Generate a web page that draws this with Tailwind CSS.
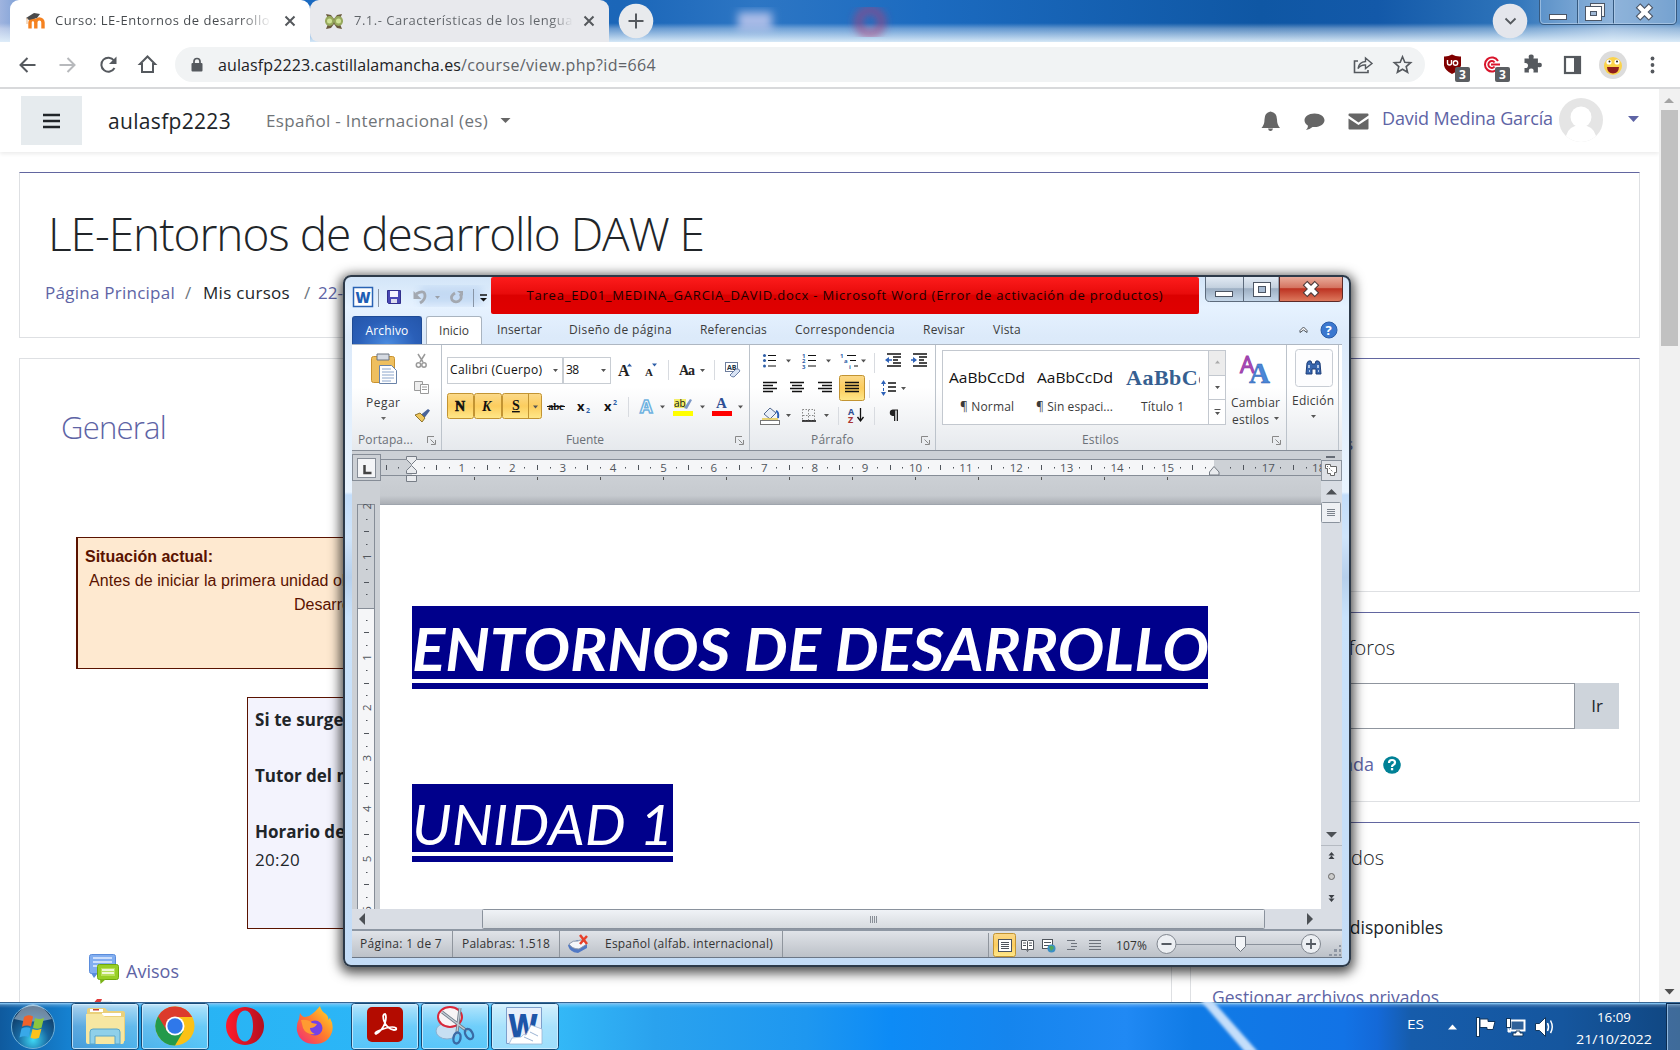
<!DOCTYPE html>
<html lang="es">
<head>
<meta charset="utf-8">
<title>Curso: LE-Entornos de desarrollo</title>
<script src="https://cdn.jsdelivr.net/npm/@tailwindcss/browser@4"></script>
</head>
<body class="w-[1680px] h-[1050px] overflow-hidden bg-white font-['Open_Sans','Noto_Sans',sans-serif] text-[#212529]">
<div class="relative flex h-[1050px] w-[1680px] flex-col overflow-hidden">

<!-- Tab strip -->
<div class="relative flex h-[42px] shrink-0 items-end bg-[linear-gradient(180deg,transparent_55%,#ffffff55_68%,#e3f1fbee_100%),linear-gradient(90deg,#9fb4df_0%,#4a82c8_3%,#1a6ac2_15%,#1b66b8_37%,#2d76c4_45%,#1c6bc0_55%,#0f57a4_75%,#1359a9_82%,#2e74ba_90%,#7fa9d6_96%,#5f93c8_100%)] pl-[10px]">
  <svg class="absolute left-[700px] top-0" width="220" height="42"><defs><filter id="bl"><feGaussianBlur stdDeviation="4"/></filter></defs><g filter="url(#bl)"><rect x="38" y="12" width="34" height="18" fill="#c9cdf0" opacity=".8"/><circle cx="170" cy="22" r="12" fill="none" stroke="#b03e78" stroke-width="7" opacity=".7"/></g></svg>
  <div class="relative flex h-[42px] w-[300px] items-center rounded-t-[9px] bg-white pl-4">
    <svg width="20" height="20" viewBox="0 0 20 20"><path d="M4 17.500V11.500a2.900 2.900 0 0 1 5.800 0v6M9.800 11.500a3.600 3.600 0 0 1 7.200 0v6" fill="none" stroke="#f58220" stroke-width="3.400"/><path d="M0 7l8-5 6 1-3 4-8 2z" fill="#4a4a4a"/><path d="M1 7v6" stroke="#e8b88a"/></svg>
    <span class="ml-[9px] w-[217px] whitespace-nowrap bg-gradient-to-r from-[#45494d] from-85% to-transparent bg-clip-text text-[13px] text-transparent"><span data-w="215">Curso: LE-Entornos de desarrollo</span></span>
    <svg class="ml-2" width="20" height="20" viewBox="0 0 20 20"><path d="M5.500 5.500l9 9m0-9l-9 9" stroke="#55585c" stroke-width="2"/></svg>
  </div>
  <div class="relative flex h-[42px] w-[299px] items-center rounded-t-[9px] rounded-bl-[9px] bg-[#e8e9ed] pl-[14px]">
    <svg width="20" height="20" viewBox="0 0 20 20"><path d="M2 3l5 1 3 4 3-4 5-1-2 5 3 2-3 3 2 5-5-1-3-4-3 4-5 1 2-5-3-3 3-2z" fill="#6a5a3e"/><ellipse cx="5.500" cy="10" rx="4.500" ry="5" fill="#97a95d"/><ellipse cx="14.500" cy="10" rx="4.500" ry="5" fill="#97a95d"/><circle cx="5.500" cy="10" r="2.500" fill="#cfe296"/><circle cx="14.500" cy="10" r="2.500" fill="#cfe296"/></svg>
    <span class="ml-[10px] w-[219px] overflow-hidden whitespace-nowrap bg-gradient-to-r from-[#5f6368] from-90% to-transparent bg-clip-text text-[13px] text-transparent"><span data-w="219">7.1.- Características de los lengua</span></span>
    <svg class="ml-[6px]" width="20" height="20" viewBox="0 0 20 20"><path d="M5.500 5.500l9 9m0-9l-9 9" stroke="#55585c" stroke-width="2"/></svg>
  </div>
  <svg class="mb-[3px] ml-[9px]" width="36" height="36"><circle cx="18" cy="18" r="17.300" fill="#e8eaed"/><path d="M10.500 18h15M18 10.500v15" stroke="#55595e" stroke-width="2"/></svg>
  <svg class="absolute right-0 top-0" width="200" height="42" viewBox="1480 0 200 42">
    <circle cx="1510" cy="21" r="17.300" fill="#e4e6ec"/><path d="M1505.500 18.500l5 5 5-5" fill="none" stroke="#55595e" stroke-width="1.800"/>
    <path d="M1539.500 -1V20q0 4.500 4.500 4.500H1672q4.500 0 4.500-4.500V-1M1577.500 0V24M1613.500 0V24" fill="#ffffff22" stroke="#36597f" /><path d="M1540.500 0V20q0 3.500 3.500 3.500H1672q3.500 0 3.500-3.500V0M1578.500 0V23M1614.500 0V23" fill="none" stroke="#bcd3ec99"/>
    <rect x="1549.500" y="14.500" width="17" height="5" fill="#fff" stroke="#4b5565"/>
    <rect x="1590.500" y="3.500" width="14" height="13" fill="#f4f4f4" stroke="#4b5565"/><rect x="1585.500" y="6.500" width="16" height="14" fill="#fff" stroke="#4b5565"/><rect x="1590.500" y="11.500" width="6" height="4" fill="#9fb8d5" stroke="#4b5565"/>
    <path d="M1638 5.500l13 13m0-13l-13 13" stroke="#4b5565" stroke-width="6.500"/><path d="M1638.700 6.200l11.600 11.600m0-11.600l-11.600 11.600" stroke="#fff" stroke-width="4.200"/>
  </svg>
</div>

<!-- Address bar -->
<div class="flex h-[47px] shrink-0 items-center border-b-2 border-[#d8d9db] bg-white">
  <svg width="175" height="45" viewBox="0 42 175 45" fill="none" stroke="#55595e" stroke-width="2"><path d="M35.500 65H20.500m7-7l-7 7 7 7"/><path d="M59.500 65h15m-7-7l7 7-7 7" stroke="#b7b9bc"/><path d="M114 60.500a7 7 0 1 0 .5 7.500"/><path d="M109 64h7.500v-7.500z" fill="#55595e" stroke="none"/><path d="M142 72V64h-2l7.500-7.500L155 64h-2v8z"/></svg>
  <div class="flex h-[35px] w-[1250px] items-center rounded-full bg-[#f1f3f4]">
    <svg class="ml-[15px]" width="14" height="16" viewBox="0 0 14 16"><rect x="1.500" y="6" width="11" height="8.500" rx="1" fill="#55595e"/><path d="M4 6.500V4.500a3 3 0 0 1 6 0v2" fill="none" stroke="#55595e" stroke-width="1.700"/></svg>
    <span class="ml-[14px] w-[440px] whitespace-nowrap text-base text-[#5f6368]"><span data-w="243" class="text-[#202124]">aulasfp2223.castillalamancha.es</span><span data-w="195">/course/view.php?id=664</span></span>
    <svg class="ml-auto mr-[11px]" width="62" height="24" viewBox="1352 53 62 24" fill="none" stroke="#55595e" stroke-width="1.600"><path d="M1358 61h-3.500v11.500H1368V70"/><path d="M1358 68.500q1-6.500 7.500-7V58l6.500 5.500-6.500 5v-3.500q-4.500-.5-7.500 3.500z" stroke-width="1.400"/><path d="M1402.500 56.800l2.300 5.400 5.900.5-4.500 3.900 1.400 5.700-5.100-3.100-5.100 3.100 1.400-5.700-4.500-3.900 5.900-.5z"/></svg>
  </div>
  <svg width="255" height="45" viewBox="1425 42 255 45">
    <path d="M1452 54.500q-4 2.300-8 2v9q1 5 8 8.500 8-3.500 9-8.500v-9q-5 .3-9-2z" fill="#800000"/><path d="M1447.500 60v3q0 2 2 2t2-2v-3" fill="none" stroke="#fff" stroke-width="1.400"/><circle cx="1455.500" cy="63" r="2.200" fill="none" stroke="#fff" stroke-width="1.400"/>
    <g fill="none" stroke="#d9152c" stroke-width="2"><path d="M1498 61a7 7 0 1 0 0 7M1494.500 62.500a3.400 3.400 0 1 0 0 4"/><path d="M1491 64.500h9" /></g>
    <rect x="1455" y="67" width="15" height="15" rx="2" fill="#5b5e62"/><rect x="1495" y="67" width="15" height="15" rx="2" fill="#5b5e62"/>
    <text x="1459" y="79" font-size="12" font-weight="700" fill="#fff">3</text><text x="1499" y="79" font-size="12" font-weight="700" fill="#fff">3</text>
    <path d="M1524.500 58.500h4.500q-1.300-4 2.200-4t2.200 4h4.500v4.500q4-1.300 4 2t-4 2v5.500h-4.500q1-4-2.200-4t-2.200 4h-4.500V68q3.500.5 3.500-2.500t-3.500-2.500z" fill="#55595e"/>
    <rect x="1565" y="57" width="15" height="16" fill="#fff" stroke="#55595e" stroke-width="2.200"/><rect x="1574" y="57" width="6" height="16" fill="#55595e"/>
    <circle cx="1613" cy="65" r="14" fill="#dcdcdc"/><circle cx="1613" cy="66" r="9" fill="#fbd34a"/><circle cx="1609" cy="62" r="2.600" fill="#fff"/><circle cx="1617" cy="62" r="2.600" fill="#fff"/><circle cx="1609.500" cy="61.500" r="1" fill="#222"/><circle cx="1617" cy="61.500" r="1" fill="#222"/><path d="M1607 67h12q-.5 6.500-6 6.500t-6-6.500z" fill="#8e1c1c"/>
    <g fill="#55595e"><circle cx="1652.500" cy="58.500" r="1.900"/><circle cx="1652.500" cy="65" r="1.900"/><circle cx="1652.500" cy="71.500" r="1.900"/></g>
  </svg>
</div>

<!-- Course page -->
<div class="flex h-[913px] shrink-0 overflow-hidden">
  <div class="flex h-[913px] w-[1659px] flex-col bg-white">
    <header class="flex h-[63px] shrink-0 items-center bg-white shadow-[0_2px_4px_#00000014]">
      <div class="ml-[21px] flex h-[49px] w-[61px] items-center justify-center bg-[#e6ebee]"><svg width="18" height="16"><path d="M0 2h17M0 8h17M0 14h17" stroke="#212529" stroke-width="2.600"/></svg></div>
      <span class="ml-[26px] mt-[3px] w-[123px] whitespace-nowrap text-[21px]"><span data-w="123">aulasfp2223</span></span>
      <span class="ml-[35px] w-[222px] whitespace-nowrap text-[17px] text-[#6f7478]"><span data-w="222">Español - Internacional (es)</span></span>
      <svg class="ml-3" width="12" height="7"><path d="M.5 1h10l-5 5z" fill="#666"/></svg>
      <svg class="ml-auto" width="112" height="30" viewBox="1260 105 112 30" fill="#666"><path d="M1271.500 110.500q6.500 1 6.500 8 0 5.500 3 8.500h-18.500q3-3 3-8.500 0-7 6-8zM1269 127.500h5q-.5 2.500-2.500 2.500t-2.500-2.500z"/><path d="M1315.500 112.500c6 0 10 3.200 10 6.800s-4 6.800-10 6.800l-2-.1q-3 2.700-6.500 3 2-1.700 2-4.300-3.500-2-3.500-5.400c0-3.600 4-6.800 10-6.800z"/><path d="M1350.500 112.500h18q1 0 1 1v1l-10 7-10-7v-1q0-1 1-1zM1349.500 117.500l10 6.500 10-6.500v10q0 1-1 1h-18q-1 0-1-1z"/></svg>
      <span class="ml-[11px] w-[172px] whitespace-nowrap pb-[4px] text-[18px] text-[#5e64a5]"><span data-w="171">David Medina García</span></span>
      <svg class="ml-[4px]" width="46" height="46" viewBox="1558 97 46 46"><clipPath id="av"><circle cx="1581" cy="119" r="22"/></clipPath><g clip-path="url(#av)"><rect x="1558" y="96" width="46" height="46" fill="#e5e5e5"/><circle cx="1581" cy="116" r="10.500" fill="#fff"/><path d="M1565 143q0-15 10-18h12q10 3 10 18z" fill="#fff"/></g></svg>
      <svg class="ml-[24px] mr-[20px] mb-[4px]" width="11" height="6"><path d="M0 0h11l-5.500 6z" fill="#5e64a5"/></svg>
    </header>
    <section class="ml-[19px] mt-5 h-[166px] w-[1621px] shrink-0 border border-[#dee0e3] border-t-[#6266a0] pl-[25px]">
      <h1 class="ml-[3px] mt-[27px] h-[68px] w-fit whitespace-nowrap text-[46px] leading-[66px] font-light"><span data-w="656">LE-Entornos de desarrollo DAW E</span></h1>
      <nav class="mt-[13px] flex h-6 items-center whitespace-nowrap text-[17px] text-[#5e64a5]"><span class="w-[130px]"><span data-w="130">Página Principal</span></span><span class="ml-[10px] w-[18px] text-[#6c757d]">/</span><span class="w-[101px] text-[#212529]"><span data-w="87">Mis cursos</span></span><span class="w-[14px] text-[#6c757d]">/</span><span>22-23 DAW</span></nav>
    </section>
    <div class="ml-[19px] mt-5 flex shrink-0">
      <section class="h-[700px] w-[1153px] shrink-0 border border-[#dee0e3] pl-[41px]">
        <h2 class="mt-[46px] h-[44px] w-fit text-[31px] leading-[44px] font-light text-[#5e64a5]"><span data-w="105">General</span></h2>
        <div class="ml-[15px] mt-[88px] h-[132px] w-[900px] border border-l-2 border-[#5a1300] bg-[#fee9d0] pl-[7px] pt-[7px] font-['Liberation_Sans',sans-serif] text-base leading-[24.500px] text-[#5a1300]">
          <p class="font-bold"><span data-w="128">Situación actual:</span></p>
          <p class="ml-1 -mt-px whitespace-nowrap"><span data-w="262">Antes de iniciar la primera unidad ob</span>ligatoria</p>
          <p class="ml-[209px] whitespace-nowrap">Desarrollo</p>
        </div>
        <div class="ml-[186px] mt-[28px] h-[232px] w-[560px] border border-[#5a1300] bg-[#f3f3fd] pl-[7px] pt-[8px] text-[17px] leading-[28px] font-bold">
          <p><span data-w="156">Si te surgen dudas</span></p><p class="mt-7">Tutor del módulo</p><p class="mt-7">Horario de tutoría</p><p class="font-normal"><span data-w="45">20:20</span></p>
        </div>
        <div class="ml-[27px] mt-[23px] flex items-center">
          <svg width="34" height="32" viewBox="88 952 34 32"><rect x="89.500" y="953.500" width="26" height="19" rx="2" fill="#82aef0" stroke="#5b8ddc"/><path d="M91 972h7l-4 5z" fill="#5b8ddc"/><path d="M93 957h19M93 961h19M93 965h10" stroke="#e6f0ff" stroke-width="1.500"/><rect x="97.500" y="963.500" width="21" height="15" rx="2" fill="#98cf26" stroke="#6fa80c"/><path d="M100 978h6l-5.500 5z" fill="#7ab317"/><rect x="101" y="967" width="14" height="8" fill="#b9e05b"/><path d="M102 969h12M102 972h12" stroke="#fff" stroke-width="1.300"/></svg>
          <span class="ml-[4px] pt-[6px] text-[18px] text-[#5e64a5]"><span data-w="53">Avisos</span></span>
        </div>
        <svg class="ml-[31px] mt-[14px]" width="22" height="14"><path d="M0 6l5-6h5l-4 10H0z" fill="#e03a3a"/><path d="M9 2h11v9H6z" fill="#eee"/></svg>
      </section>
      <div class="ml-[18px] flex w-[450px] flex-col gap-5 font-light">
        <section class="h-[234px] shrink-0 border border-[#dee0e3] border-t-[#6266a0] pl-[20px] pt-[72px]"><p class="w-[142px] text-right text-[17px] font-normal text-[#5e64a5]">Competencias</p></section>
        <section class="h-[190px] shrink-0 border border-[#dee0e3] border-t-[#6266a0] px-5 pt-[20px]">
          <p class="w-[184px] text-right text-[20px] leading-[30px]">Buscar en los foros</p>
          <div class="mt-[20px] flex h-[46px] w-[408px]"><div class="w-[364px] border border-[#8f959e]"></div><div class="flex w-[44px] items-center justify-center bg-[#ced4db] text-[17px] font-normal">Ir</div></div>
          <div class="mt-[21px] flex h-[28px] items-center text-[18px] font-normal text-[#5e64a5]"><span class="flex w-[163px] justify-end whitespace-nowrap">Búsqueda avanzada</span><svg class="ml-[9px] mt-[2px]" width="18" height="18"><circle cx="9" cy="9" r="8.800" fill="#008196"/><path d="M6 7q0-3 3-3t3 2.500q0 1.500-1.500 2.200T9 11" fill="none" stroke="#fff" stroke-width="2.200"/><rect x="7.900" y="12" width="2.300" height="2.300" fill="#fff"/></svg></div>
        </section>
        <section class="h-[300px] shrink-0 border border-[#dee0e3] border-t-[#6266a0] px-[21px] pt-[20px]">
          <p class="w-[172px] text-right text-[20px] leading-[30px]">Archivos privados</p>
          <p class="mt-[40px] flex w-[231px] justify-end whitespace-nowrap text-[17.500px] leading-[28px] font-normal">No hay archivos disponibles</p>
          <p class="mt-[42px] whitespace-nowrap text-[17.500px] leading-[28px] font-normal text-[#5e64a5]"><span data-w="227">Gestionar archivos privados</span></p>
        </section>
      </div>
    </div>
  </div>
  <div class="flex w-[21px] flex-col items-center bg-[#f1f1f1]">
    <svg width="21" height="21"><path d="M5 14l5-5 5 5z" fill="#a3a3a3"/></svg><div class="h-[236px] w-[17px] bg-[#c1c1c1]"></div><svg class="mt-auto" width="21" height="21"><path d="M5.500 8h10l-5 5.500z" fill="#505050"/></svg>
  </div>
</div>

<!-- Taskbar -->
<div class="flex h-[48px] shrink-0 bg-[linear-gradient(180deg,#123a66_0px,#7fc0f0_1.500px,#ffffff33_3px,transparent_6px),linear-gradient(90deg,#0f5a9e_0%,#1580cf_4%,#1f9de4_8%,#28b4f4_12%,#2db6f8_25%,#35bdf9_32%,#2aa2ee_39%,#1e97f0_48%,#0d8bf6_53%,#1585ee_60%,#2089f4_67%,#107be6_71%,#1273e6_80%,#1469d8_82%,#165cab_84%,#15569e_93%,#104680_100%)]">
  <svg width="1680" height="48" viewBox="0 1002 1680 48">
    <defs>
      <radialGradient id="orb" cx=".5" cy=".8" r=".8"><stop offset="0" stop-color="#3fd8f5"/><stop offset=".45" stop-color="#17669f"/><stop offset="1" stop-color="#0c2c52"/></radialGradient>
      <linearGradient id="tb" x1="0" y1="0" x2="0" y2="1"><stop offset="0" stop-color="#fff" stop-opacity=".65"/><stop offset=".5" stop-color="#fff" stop-opacity=".3"/><stop offset="1" stop-color="#fff" stop-opacity=".2"/></linearGradient>
      <linearGradient id="ff" x1="1" y1="0" x2="0" y2="1"><stop offset="0" stop-color="#ffe226"/><stop offset=".5" stop-color="#ff7b2e"/><stop offset="1" stop-color="#f0267c"/></linearGradient>
      <linearGradient id="op" x1="0" y1="0" x2="1" y2="0"><stop offset="0" stop-color="#ff1b2d"/><stop offset="1" stop-color="#b3101f"/></linearGradient>
      <filter id="b2"><feGaussianBlur stdDeviation="1.500"/></filter>
    </defs>
    <path d="M1200 1000l12 0 46 52h-13z" fill="#c4defa" filter="url(#b2)"/>
    <circle cx="33" cy="1027" r="21.500" fill="url(#orb)" stroke="#6fb0d8"/><path d="M14 1019q19-30 38 0-19 5-38 0z" fill="#fff" opacity=".4"/>
    <path d="M24 1017q4-3 9-.5l-2 10q-4-2-9 .3z" fill="#f0622b"/><path d="M35 1018q5 2 9-.3l-2.500 10q-4 2-8.500 0z" fill="#8cc540"/><path d="M21.500 1028.500q5-2.500 9-.3l-2 9q-4-2-9 .3z" fill="#38a8e8"/><path d="M32.500 1029q5 2 9-.2l-2.500 9q-4 2-8.500 0z" fill="#fcc21b"/>
    <g fill="url(#tb)" stroke="#174a76"><rect x="71.500" y="1003.500" width="67" height="46" rx="3"/><rect x="141.500" y="1003.500" width="67" height="46" rx="3"/><rect x="351.500" y="1003.500" width="67" height="46" rx="3"/><rect x="421.500" y="1003.500" width="67" height="46" rx="3"/><rect x="491.500" y="1003.500" width="67" height="46" rx="3"/></g><rect x="492" y="1004" width="66" height="45" rx="3" fill="#fff" opacity=".4"/>
    <g fill="none" stroke="#d6efff" opacity=".8"><rect x="72.500" y="1004.500" width="65" height="44" rx="2"/><rect x="142.500" y="1004.500" width="65" height="44" rx="2"/><rect x="352.500" y="1004.500" width="65" height="44" rx="2"/><rect x="422.500" y="1004.500" width="65" height="44" rx="2"/><rect x="492.500" y="1004.500" width="65" height="44" rx="2"/></g>
    <path d="M87 1010q0-2 2-2h16l3 3h15q2 0 2 2v28H87z" fill="#ead07a"/><path d="M90 1009h13v3H90zM102 1013h19v3h-19z" fill="#fff"/><path d="M93 1009h6v1.500h-6z" fill="#c43"/><path d="M86 1014h16l3 3h19v25q0 2-2 2H88q-2 0-2-2z" fill="#f7e7a2"/><path d="M90 1032q0-3 3-3h24q3 0 3 3v12h-5v-8H95v8h-5z" fill="#8fd0ea" stroke="#5ba6c8"/>
    <circle cx="175" cy="1026" r="19.500" fill="#fbc116"/><path d="M175 1026L158.100 1016.200A19.500 19.500 0 0 0 175 1045.500L183.500 1031z" fill="#239a4b"/><path d="M175 1017H192.200A19.500 19.500 0 0 0 158.100 1016.200L167 1031z" fill="#dc3b2c"/><circle cx="175" cy="1026" r="9.500" fill="#fff"/><circle cx="175" cy="1026" r="7.700" fill="#2f78ea"/>
    <path fill-rule="evenodd" d="M245 1007a19 19 0 1 0 .01 0zM245 1010.500c5 0 8 6.500 8 15.500s-3 15.500-8 15.500-8.500-6.500-8.500-15.500 3.500-15.500 8.500-15.500z" fill="url(#op)"/>
    <path d="M320 1006q1 5 6 8 3 3 2 6l2-2q4 7 2 14-4 12-17 12-15 0-18-13-1-7 2-12l1-6q2 4 5 4 4 0 7-3 4-3 8-8z" fill="url(#ff)"/><circle cx="315" cy="1028" r="7.500" fill="#7542e5"/><path d="M301 1020q7-1 11 3l5 1q-2 4-7 4 0 4 5 6-9 1-12-6z" fill="#ff9a32"/>
    <rect x="367" y="1007" width="36" height="35" rx="5" fill="#b30b00"/><path d="M376 1034q6-3 9-11 2-7 0-9-3 0-1 7 3 8 10 9 3 0 2-2-4-3-18 3-4 2-2 3z" fill="none" stroke="#fff" stroke-width="1.800"/>
    <ellipse cx="447" cy="1031" rx="11" ry="8" fill="#c7dff2" stroke="#8ab0d0"/><ellipse cx="450" cy="1017" rx="12" ry="10" fill="#f8f4f6" stroke="#d8283a" stroke-width="2"/><path d="M442 1012l25 19M460 1008l-3 24" stroke="#6f7b88" stroke-width="3"/><path d="M442 1012l25 19M460 1008l-3 24" stroke="#c3ccd5" stroke-width="1.400"/><ellipse cx="457" cy="1038" rx="3.500" ry="5.500" transform="rotate(12 457 1038)" fill="none" stroke="#3a6ba5" stroke-width="2.400"/><ellipse cx="469" cy="1034" rx="3.500" ry="5.500" transform="rotate(-30 469 1034)" fill="none" stroke="#3a6ba5" stroke-width="2.400"/>
    <path d="M506.500 1007.500h35v36h-35z" fill="#e8f0fb" stroke="#7d9fcb"/><text x="508" y="1037" font-size="32" font-weight="800" fill="#1d55a8" textLength="30" lengthAdjust="spacingAndGlyphs">W</text><path d="M531 1025l11 4v15h-33l3-6 9-1q3-4 5-2z" fill="#fff" stroke="#9bb4d4" stroke-width=".8"/><path d="M530 1032l8 4M524 1037l9 4" stroke="#9bb4d4"/>
    <g fill="#fff" font-size="12"><text x="1407" y="1029" textLength="17" lengthAdjust="spacingAndGlyphs">ES</text><text x="1597" y="1022" textLength="34" font-size="13" lengthAdjust="spacingAndGlyphs">16:09</text><text x="1576" y="1044" textLength="76" font-size="13" lengthAdjust="spacingAndGlyphs">21/10/2022</text></g>
    <path d="M1448 1029.500l4.500-5 4.500 5z" fill="#fff"/>
    <g stroke="#12365c" fill="#fff"><rect x="1476.500" y="1017.500" width="3" height="19"/><path d="M1480 1019h8v2.500h7l-2 8h-6v-2h-7z"/><rect x="1510.500" y="1020.500" width="14" height="10" fill="#2f6199" stroke="#fff" stroke-width="2"/><path d="M1513 1036h10v-3h-3v-2h-4v2h-3z"/><rect x="1506.500" y="1018.500" width="4" height="9"/><path d="M1508 1028v4h3" stroke="#fff"/><path d="M1535.500 1023.500h4l6-6v19l-6-6h-4z"/><path d="M1547.500 1023q2 4 0 8M1550.500 1020.500q3.500 6.500 0 12.500" fill="none" stroke="#fff" stroke-width="1.500"/></g>
    <rect x="1666.500" y="1003.500" width="14" height="47" fill="#ffffff33" stroke="#0a2c52"/><path d="M1667.500 1004v46" stroke="#8fb8e0"/>
  </svg>
</div>

<!-- Word window -->
<div class="absolute left-[343px] top-[275px] flex h-[692px] w-[1008px] flex-col overflow-hidden rounded-[8px] border-2 border-[#2d3a49] bg-[linear-gradient(180deg,#d3e5f8_0px,#e6f2ff_30px,#dceafa_60px,#e9f4ff_215px,#c3ddfa_218px,#cfe4fa_260px,#b6cfeb_300px,#c9e2fb_340px,#c4dcf6_100%)] px-[7px] shadow-[0_3px_12px_3px_#000000b3]">
  <!-- Title bar -->
  <div class="flex h-[38px] shrink-0">
    <svg class="shrink-0" width="139" height="38" viewBox="352 277 139 38">
      <rect x="420" y="287" width="62" height="18" fill="#a8c6ea" opacity=".5" filter="url(#bl)"/>
      <rect x="353.500" y="287.500" width="19" height="19" fill="#fff" stroke="#2a63b4" stroke-width="1.500"/><text x="355.500" y="303" font-size="15.500" font-weight="800" fill="#1f5fb5" textLength="15" lengthAdjust="spacingAndGlyphs">W</text>
      <path d="M378.500 289v18M473.500 289v18" stroke="#8895a6"/>
      <path d="M387.500 290.500h13v13h-12l-1-1z" fill="#4a48b5" stroke="#32308c"/><rect x="390" y="291" width="8" height="6" fill="#f4f4ff"/><rect x="391" y="299" width="6" height="4" fill="#dde"/>
      <path d="M416 294q9-5 9 2 0 4-5 7" fill="none" stroke="#a3a8b0" stroke-width="2.800"/><path d="M413.500 291v8h8z" fill="#a3a8b0"/><path d="M435 296h5l-2.500 3z" fill="#9aa0a8"/><path d="M455 293q-5 3-3 7 3 3 7 1 4-3 1-7" fill="none" stroke="#a3a8b0" stroke-width="2.700"/><path d="M457 291h6v5z" fill="#a3a8b0"/>
      <path d="M480 295h7" stroke="#111" stroke-width="1.500"/><path d="M480 298h7l-3.500 3.500z" fill="#111"/>
    </svg>
    <div class="flex h-[37px] w-[708px] shrink-0 items-center justify-center whitespace-nowrap rounded-[2px] bg-[linear-gradient(180deg,#fd1c1c,#e80b0b_45%,#dc0000_50%,#e00000)] text-[13px] text-[#1c0000]"><span data-w="637">Tarea_ED01_MEDINA_GARCIA_DAVID.docx - Microsoft Word (Error de activación de productos)</span></div>
    <svg class="-mr-1 ml-[5px] shrink-0" width="142" height="30" viewBox="1204 277 142 30">
      <defs><linearGradient id="cb" x1="0" y1="0" x2="0" y2="1"><stop offset="0" stop-color="#e4ecf5"/><stop offset=".45" stop-color="#c4d1df"/><stop offset=".5" stop-color="#9dafc3"/><stop offset="1" stop-color="#c6d8ea"/></linearGradient><linearGradient id="cr" x1="0" y1="0" x2="0" y2="1"><stop offset="0" stop-color="#eab0a0"/><stop offset=".45" stop-color="#d57562"/><stop offset=".5" stop-color="#bd3322"/><stop offset="1" stop-color="#de7b5f"/></linearGradient></defs>
      <path d="M1205.500 276V297q0 4.500 4 4.500H1279V276z" fill="url(#cb)" stroke="#5d6b7c"/><path d="M1279.500 276V301.500H1338q4.500 0 4.500-4.500V276z" fill="url(#cr)" stroke="#5c2a28"/><path d="M1243.500 277V301" stroke="#5d6b7c"/>
      <rect x="1215.500" y="291.500" width="17" height="5" fill="#fff" stroke="#4c5563" /><rect x="1253.500" y="282.500" width="17" height="14" fill="#fff" stroke="#4c5563"/><rect x="1258.500" y="286.500" width="7" height="6" fill="#a8bcd3" stroke="#4c5563"/>
      <path d="M1305 283l12 12m0-12l-12 12" stroke="#4c3b3b" stroke-width="6.500"/><path d="M1305.700 283.700l10.600 10.600m0-10.600l-10.600 10.600" stroke="#fff" stroke-width="4.200"/>
    </svg>
  </div>
  <!-- Ribbon tabs -->
  <div class="flex h-[29px] shrink-0 items-center whitespace-nowrap pt-px text-[12px] text-[#3b3b3b]">
    <div class="flex h-[28px] w-[70px] items-center justify-center rounded-t-[3px] border border-b-0 border-[#1e4b96] bg-[radial-gradient(ellipse_at_bottom,#4a8be0_0%,#2a5fb8_60%,#2456aa_100%)] text-white"><span data-w="43">Archivo</span></div>
    <div class="ml-1 flex h-[28px] w-[56px] items-center justify-center rounded-t-[3px] border border-b-0 border-[#a9b4c0] bg-white"><span data-w="30">Inicio</span></div>
    <div class="w-[72px] pl-[15px]"><span data-w="45">Insertar</span></div><div class="w-[131px] pl-[15px]"><span data-w="103">Diseño de página</span></div><div class="w-[95px] pl-[15px]"><span data-w="67">Referencias</span></div><div class="w-[128px] pl-[15px]"><span data-w="100">Correspondencia</span></div><div class="w-[70px] pl-[15px]"><span data-w="42">Revisar</span></div><div class="w-[60px] pl-[15px]"><span data-w="28">Vista</span></div>
    <svg class="ml-auto mr-[1px]" width="44" height="20" viewBox="1297 319 44 20"><path d="M1300 331.500v-2l3.500-3.500 3.500 3.500v2l-3.500-2.500z" fill="#fff" stroke="#4a5058"/><circle cx="1329" cy="329" r="8" fill="#3a77cf" stroke="#2a5ca8"/><text x="1325.500" y="334" font-size="13" font-weight="700" fill="#fff">?</text></svg>
  </div>
  <!-- Ribbon -->
  <div class="flex h-[107px] shrink-0 border-b border-t border-b-[#868d97] border-t-[#aeb7c2] bg-gradient-to-b from-white from-40% to-[#e6e9ed] text-[12px] text-[#6b7077]">
    <div class="flex w-[90px] shrink-0 flex-col items-center border-r border-[#bcc3cb]">
      <svg width="89" height="85" viewBox="352 345 89 85">
        <rect x="371.500" y="356.500" width="23" height="26" rx="2" fill="#eebf5f" stroke="#c9922e"/><path d="M377 354h12v6h-12z" fill="#d5dae2" stroke="#6c7480"/><path d="M379.500 365.500h12l5 5v13h-17z" fill="#fff" stroke="#6a83a8"/><path d="M382 369h9M382 372h12M382 375h12M382 378h12M382 381h9" stroke="#8ca6cc"/>
        <text x="366" y="407" font-size="12" fill="#3b3b3b" textLength="34">Pegar</text><path d="M381 417h5l-2.500 3z" fill="#666"/>
        <g fill="none" stroke="#9a9a9a" stroke-width="1.500"><path d="M418 354l5 8M425 354l-5 8"/><circle cx="418.500" cy="365" r="2.200"/><circle cx="424" cy="365" r="2.200"/><path d="M414.500 381.500h8v9h-8z" fill="#eee" stroke-width="1"/><path d="M420.500 384.500h8v9h-8z" fill="#fff" stroke-width="1"/><path d="M422 387h5M422 389.500h5" stroke-width="1"/></g>
        <path d="M428 409l2 1.500-6 8-4-3z" fill="#4a6499"/><path d="M415 415l5-2 5 5-3 4z" fill="#f0c75c" stroke="#8d7430"/>
      </svg>
      <div class="flex h-[20px] w-full items-center pl-[6px]"><span data-w="55">Portapa...</span><svg class="ml-auto mr-[5px]" width="9" height="9"><path d="M.5 7V.5H7M4 8.500h4.500V4M3.500 3.500l4 4" fill="none" stroke="#888"/></svg></div>
    </div>
    <div class="flex w-[308px] shrink-0 flex-col border-r border-[#bcc3cb]">
      <svg width="307" height="85" viewBox="442 345 307 85">
        <g fill="#fff" stroke="#c8cdd3"><rect x="447.500" y="357.500" width="115" height="26"/><rect x="563.500" y="357.500" width="47" height="26"/></g>
        <g font-size="12" fill="#111"><text x="450" y="374" textLength="92">Calibri (Cuerpo)</text><text x="566" y="374" textLength="13">38</text></g>
        <path d="M553 369h5l-2.500 3zM601 369h5l-2.500 3zM700 369h5l-2.500 3z" fill="#555"/>
        <g font-family="Liberation Serif" font-weight="700" fill="#222"><text x="618" y="376" font-size="16">A</text><text x="645" y="376" font-size="11">A</text><text x="679" y="375" font-size="14" textLength="16">Aa</text></g>
        <path d="M627 366.500h5l-2.500-3zM652 363.500h5l-2.500 3z" fill="#2e5fa8"/><path d="M668.500 360v20M714.500 360v20" stroke="#d8dbe0"/>
        <rect x="725.500" y="362.500" width="12" height="9" fill="#fff" stroke="#6d7d9c"/><text x="727" y="370" font-size="7" font-weight="700" fill="#234">AB</text><path d="M730 375l6-6q3-1 4 2l-6 6q-3 0-4-2z" fill="#d9e4f5" stroke="#6b80a8"/>
        <defs><linearGradient id="yl" x1="0" y1="0" x2="0" y2="1"><stop offset="0" stop-color="#fbd98a"/><stop offset=".5" stop-color="#fccd5e"/><stop offset="1" stop-color="#ffe88a"/></linearGradient></defs>
        <g fill="url(#yl)" stroke="#c29433"><rect x="447.500" y="393.500" width="26" height="25" rx="2"/><rect x="474.500" y="393.500" width="27" height="25" rx="2"/><rect x="502.500" y="393.500" width="39" height="25" rx="2"/><path d="M528.500 394v24"/></g>
        <g font-family="Liberation Serif" font-weight="700" fill="#111"><text x="455" y="411" font-size="14" stroke="#111" stroke-width=".6">N</text><text x="482" y="411" font-size="14" font-style="italic">K</text><text x="512" y="410" font-size="14" text-decoration="underline">S</text></g><path d="M533 405.500h5l-2.500 3zM660 405.500h5l-2.500 3zM700 405.500h5l-2.500 3zM738 405.500h5l-2.500 3z" fill="#555"/>
        <g font-weight="700" fill="#111"><text x="548" y="410" font-size="11" textLength="16" font-family="Liberation Serif">abc</text><path d="M547 406.500h18" stroke="#111"/><text x="577" y="411" font-size="13">x</text><text x="604" y="411" font-size="13">x</text></g><g font-size="7" font-weight="700" fill="#2e5fa8"><text x="586" y="413">2</text><text x="613" y="405">2</text></g>
        <path d="M628.500 397v20" stroke="#d8dbe0"/><text x="640" y="413" font-size="18" font-weight="700" fill="#fff" stroke="#6fb2e0" stroke-width="1.500">A</text>
        <rect x="674" y="399" width="12" height="9" fill="#f3ee6a"/><text x="674" y="407" font-size="10" fill="#111">ab</text><path d="M684 408l6-9 2 1-5 9z" fill="#7c98c6"/><rect x="673" y="411" width="20" height="5" fill="#ff0"/>
        <text x="716" y="408" font-size="15" font-weight="700" font-family="Liberation Serif" fill="#2d4f94">A</text><rect x="712" y="411" width="20" height="5" fill="#f00"/>
      </svg>
      <div class="flex h-[20px] items-center pl-[124px]"><span data-w="38">Fuente</span><svg class="ml-auto mr-[5px]" width="9" height="9"><path d="M.5 7V.5H7M4 8.500h4.500V4M3.500 3.500l4 4" fill="none" stroke="#888"/></svg></div>
    </div>
    <div class="flex w-[186px] shrink-0 flex-col border-r border-[#bcc3cb]">
      <svg width="185" height="85" viewBox="750 345 185 85">
        <g stroke="#111" stroke-width="1.200"><path d="M768 355.500h8M768 360.500h8M768 366h8M808 355.500h8M808 360.500h8M808 366h8M847 355.500h9M850 360.500h6M854 366h4"/></g>
        <g fill="#2e5fa8"><circle cx="764.500" cy="355.500" r="1.500"/><circle cx="764.500" cy="360.500" r="1.500"/><circle cx="764.500" cy="366" r="1.500"/></g><g font-size="6" font-weight="700" fill="#2e5fa8"><text x="802" y="358">1</text><text x="802" y="363">2</text><text x="802" y="368.500">3</text><text x="840" y="358">1</text><text x="844" y="363">a</text><text x="849" y="368.500">i</text></g>
        <path d="M786 359.500h5l-2.500 3zM826 359.500h5l-2.500 3zM861 359.500h5l-2.500 3zM901 387h5l-2.500 3zM786 414h5l-2.500 3zM824 414h5l-2.500 3z" fill="#555"/><path d="M874.500 353v20M838.500 407v18M874.500 407v18M869.500 380v18" stroke="#d8dbe0"/>
        <g stroke="#111" stroke-width="1.300"><path d="M887 354h14M893 357h8M893 360h5M893 363h8M887 366h14M913 354h14M919 357h8M919 360h5M919 363h8M913 366h14"/></g><path d="M885 360l4-3v6zM917 360l-4-3v6z" fill="#2e62b8"/><path d="M888 360h4M911 360h4" stroke="#2e62b8" stroke-width="1.500"/>
        <rect x="839.500" y="375.500" width="25" height="25" rx="2" fill="url(#yl)" stroke="#c29433"/>
        <g stroke="#111" stroke-width="1.300"><path d="M763 382.500h14M763 385.500h10M763 388.500h14M763 391.500h10M790 382.500h14M792 385.500h10M790 388.500h14M792 391.500h10M818 382.500h14M822 385.500h10M818 388.500h14M822 391.500h10M845 382.500h14M845 385.500h14M845 388.500h14M845 391.500h14M888 383h8M888 387h8M888 391h8"/></g><path d="M883.500 380l2.500 4h-5zM883.500 396l2.500-4h-5z" fill="#2e62b8"/><path d="M883.500 383v10" stroke="#2e62b8" stroke-dasharray="3 2"/>
        <path d="M764 414l6-6 6 5-6 6z" fill="#e8eef8" stroke="#53698f"/><path d="M776 411q3 1 2 7" stroke="#2e62b8" stroke-width="2" fill="none"/><rect x="760.500" y="420.500" width="19" height="4" fill="#fff" stroke="#777"/><path d="M762 419h16" stroke="#e5c94a" stroke-width="1.500"/>
        <path d="M802.500 409.500h12v11h-12zM808.500 410v10M803 415.500h12" fill="none" stroke="#888" stroke-dasharray="1.500 1.500"/><path d="M802 421h14" stroke="#111" stroke-width="1.500"/>
        <text x="848" y="415" font-size="9" font-weight="700" fill="#2d4f94">A</text><text x="848" y="423" font-size="9" font-weight="700" fill="#a33">Z</text><path d="M860.500 408v13M857.500 417l3 4 3-4" stroke="#111" fill="none" stroke-width="1.300"/>
        <path d="M897 409.500h-4.500a3.300 3.300 0 0 0 0 6.500h1.500v5h1.300v-10.500h1.400v10.500h1.300v-11.500z" fill="#222"/>
      </svg>
      <div class="flex h-[20px] items-center pl-[61px]"><span data-w="43">Párrafo</span><svg class="ml-auto mr-[5px]" width="9" height="9"><path d="M.5 7V.5H7M4 8.500h4.500V4M3.500 3.500l4 4" fill="none" stroke="#888"/></svg></div>
    </div>
    <div class="flex w-[351px] shrink-0 flex-col border-r border-[#bcc3cb]">
      <svg width="350" height="85" viewBox="936 345 350 85">
        <rect x="942.500" y="350.500" width="283" height="74" fill="#fff" stroke="#c3c8cf"/><path d="M1208.500 351v73M1209 375.500h16M1209 399.500h16" stroke="#c3c8cf"/><rect x="1209" y="351" width="16" height="24" fill="#ececec"/>
        <path d="M1215 363.500h5l-2.500-3z" fill="#aaa"/><path d="M1215 386h5l-2.500 3zM1215 412h5l-2.500 3z" fill="#555"/><path d="M1214.500 409.500h6" stroke="#555"/>
        <g font-size="15" fill="#111"><text x="949" y="383" textLength="76" lengthAdjust="spacingAndGlyphs">AaBbCcDd</text><text x="1037" y="383" textLength="76" lengthAdjust="spacingAndGlyphs">AaBbCcDd</text></g>
        <clipPath id="cc"><rect x="1120" y="355" width="80" height="40"/></clipPath><text x="1126" y="385" font-size="22" font-family="Liberation Serif" font-weight="700" fill="#365f91" clip-path="url(#cc)" textLength="82">AaBbCc</text>
        <g font-size="12" fill="#3b3b3b"><text x="960" y="411" textLength="54">¶ Normal</text><text x="1036" y="411" textLength="77">¶ Sin espaci...</text><text x="1141" y="411" textLength="43">Título 1</text><text x="1231" y="407" textLength="49">Cambiar</text><text x="1232" y="424" textLength="37">estilos</text></g><path d="M1274 417h5l-2.500 3z" fill="#555"/>
        <text x="1240" y="373" font-size="23" fill="#b24fbe" stroke="#9a3ea8">A</text><text x="1249" y="383" font-size="29" font-family="Liberation Serif" font-weight="700" fill="#4b87d8" stroke="#2f62b0" stroke-width=".5">A</text>
      </svg>
      <div class="flex h-[20px] items-center pl-[146px]"><span data-w="37">Estilos</span><svg class="ml-auto mr-[5px]" width="9" height="9"><path d="M.5 7V.5H7M4 8.500h4.500V4M3.500 3.500l4 4" fill="none" stroke="#888"/></svg></div>
    </div>
    <div class="w-[52px] shrink-0 border-r border-[#bcc3cb]">
      <svg width="51" height="85" viewBox="1287 345 51 85"><rect x="1295.500" y="349.500" width="37" height="37" rx="3" fill="#fdfdfe" stroke="#c8cdd4"/><path d="M1307 363q1-3 4-2l1 3h3l1-3q3-1 4 2l1 11h-5v-5h-4v5h-6z" fill="#3765ad" stroke="#1f3f78"/><path d="M1309 365v3M1318 365v3M1309 371h1M1318 371h1" stroke="#dce8fa" stroke-width="1.500"/><text x="1292" y="405" font-size="12" fill="#3b3b3b" textLength="42">Edición</text><path d="M1311 415h5l-2.500 3z" fill="#555"/></svg>
    </div>
  </div>
  <!-- Document area -->
  <div class="flex h-[478px] shrink-0 bg-[#ccd0d5]">
    <div class="flex w-[969px] flex-col">
      <svg id="hruler" class="shrink-0" width="969" height="53" viewBox="352 451 969 53"></svg>
      <div class="flex h-[405px]">
        <svg id="vruler" class="shrink-0" width="28" height="405" viewBox="352 504 28 405"></svg>
        <div class="w-[941px] border-t border-[#9fa5ad] bg-white pl-[32px] font-['Lato',sans-serif] text-white italic">
          <div class="mt-[101px] w-[796px]">
            <svg class="block bg-[#00008b]" width="796" height="73"><text x="0" y="65" font-size="60" font-weight="700" textLength="797" lengthAdjust="spacingAndGlyphs" fill="#fff">ENTORNOS DE DESARROLLO</text></svg>
            <div class="mt-[4px] h-[6px] bg-[#00008b]"></div>
          </div>
          <div class="mt-[95px] w-[261px]">
            <svg class="block bg-[#00008b]" width="261" height="68"><text x="0" y="61" font-size="57" textLength="261" lengthAdjust="spacingAndGlyphs" fill="#fff">UNIDAD 1</text></svg>
            <div class="mt-[4px] h-[6px] bg-[#00008b]"></div>
          </div>
        </div>
      </div>
      <svg class="shrink-0" width="969" height="20" viewBox="352 909 969 20"><defs><linearGradient id="sb" x1="0" y1="0" x2="0" y2="1"><stop offset="0" stop-color="#f0f3f7"/><stop offset="1" stop-color="#d6dade"/></linearGradient></defs><rect x="352" y="909" width="969" height="20" fill="#d9dde4"/><path d="M359 919l6-6v12z" fill="#4c5055"/><rect x="482.500" y="909.500" width="782" height="19" rx="1" fill="url(#sb)" stroke="#8a929d"/><path d="M870.500 916v7M872.500 916v7M874.500 916v7M876.500 916v7" stroke="#888e96"/><path d="M1313 919l-6-6v12z" fill="#4c5055"/></svg>
    </div>
    <svg width="21" height="478" viewBox="1321 451 21 478">
      <rect x="1321" y="481" width="21" height="448" fill="#d9dde4"/><path d="M1326 457h9" stroke="#666c75" stroke-width="2"/>
      <rect x="1321.500" y="460.500" width="20" height="20" fill="#dde0e5" stroke="#8a929d"/><path d="M1325.500 464.500h5v2h6v6h-2v3h-4v-2h-3v-5h-2z" fill="#fff" stroke="#666"/><path d="M1327 466l6 6" stroke="#666" stroke-dasharray="1.500 1.500"/>
      <path d="M1326 494.500h11l-5.500-5.500zM1326 832h11l-5.500 5.500z" fill="#4c5055"/><rect x="1321.500" y="502.500" width="19" height="20" rx="1" fill="#eef0f4" stroke="#8a929d"/><path d="M1327 509.500h8M1327 511.500h8M1327 513.500h8M1327 515.500h8" stroke="#7b828c"/>
      <path d="M1321 845.500h21" stroke="#b5bac2"/><path d="M1328.500 855.500h6l-3-3.500zM1328.500 859h6l-3-3.500zM1328.500 895h6l-3 3.500zM1328.500 898.500h6l-3 3.500z" fill="#3c4046"/><circle cx="1331.500" cy="876.500" r="3" fill="#ccc" stroke="#666"/>
    </svg>
  </div>
  <!-- Status bar -->
  <div class="flex h-[29px] shrink-0 items-center whitespace-nowrap border-b border-t-2 border-b-[#6b7685] border-t-[#8e97a3] bg-gradient-to-b from-[#e0e3e8] to-[#bcc1c8] text-[12px] text-[#333]">
    <div class="flex h-full w-[101px] items-center border-r border-[#8f959d] pl-[8px]"><span data-w="82">Página: 1 de 7</span></div>
    <div class="flex h-full w-[107px] items-center border-r border-[#8f959d] pl-[9px]"><span data-w="88">Palabras: 1.518</span></div>
    <svg class="ml-[6px]" width="24" height="24" viewBox="566 931 24 24"><path d="M568 944l9-5 10 5v3l-9 5q-9-1-10-8z" fill="#5078c4"/><path d="M569 943q4-4 9-3 4-3 9 3l-8 5q-7 0-10-5z" fill="#f4f6fa" stroke="#8a96ac"/><path d="M580 934l7 9M587 935l-7 8" stroke="#e8402a" stroke-width="2.500"/></svg>
    <span class="ml-[15px] w-[168px]"><span data-w="168">Español (alfab. internacional)</span></span><div class="ml-[9px] h-full border-l border-[#8f959d]"></div>
    <svg class="ml-auto" width="356" height="25" viewBox="986 931 356 25">
      <path d="M988.500 932v24" stroke="#8f959d"/><rect x="993.500" y="932.500" width="22" height="23" rx="2" fill="url(#yl)" stroke="#c29433"/>
      <g fill="#fff" stroke="#4e545c"><rect x="998.500" y="938.500" width="13" height="12"/><path d="M1001 941.500h8M1001 943.500h8M1001 945.500h8M1001 947.500h8"/><path d="M1021.500 939.500h5l1 1 1-1h5v9h-5l-1 2-1-2h-5zM1027.500 941v8"/><path d="M1023 942h3M1023 944.500h3M1029 942h3M1029 944.500h3"/><rect x="1042.500" y="938.500" width="10" height="9"/><path d="M1044 941.500h7M1044 944.500h7"/></g><circle cx="1051.500" cy="947.500" r="4" fill="#3b8fc4"/><path d="M1049 946q3-3 5 1l-3 3z" fill="#4fa85b"/>
      <g stroke="#6d737c"><path d="M1067 939.500h8M1071 942.500h6M1071 945.500h6M1067 948.500h8M1089 939.500h12M1089 942.500h12M1089 945.500h12M1089 948.500h12"/></g>
      <text x="1116" y="949" font-size="12" fill="#333" textLength="31">107%</text>
      <path d="M1176 943.500h126" stroke="#8a919b"/><g fill="#eceff3" stroke="#80868f"><circle cx="1166.500" cy="943" r="9.500"/><circle cx="1311" cy="943" r="9.500"/></g><path d="M1161.500 943h10M1306 943h10M1311 938v10" stroke="#555b63" stroke-width="1.800"/><path d="M1235.500 935.500h10v10l-5 5-5-5z" fill="#f3f5f8" stroke="#6d747e"/>
      <g fill="#8e96a3"><rect x="1339" y="944" width="2" height="2"/><rect x="1334" y="948" width="3" height="3"/><rect x="1339" y="948" width="2" height="3"/><rect x="1329" y="953" width="3" height="2"/><rect x="1334" y="953" width="3" height="2"/><rect x="1339" y="953" width="2" height="2"/></g>
    </svg>
  </div>
</div>
</div>

<script>
// Horizontal ruler: one centimetre is 50.4 px, zero at x = 411
let h = '<defs><linearGradient id="gr" x1="0" y1="0" x2="0" y2="1"><stop offset="0" stop-color="#ccd0d5"/><stop offset=".7" stop-color="#c6cacf"/><stop offset="1" stop-color="#abafb5"/></linearGradient></defs><rect x="380" y="476" width="941" height="28" fill="url(#gr)"/>' +
 '<rect x="352.500" y="454.500" width="28" height="26" fill="#ccd0d5" stroke="#868d97"/><rect x="357.500" y="458.500" width="18" height="19" fill="#f4f5f7" stroke="#868d97"/><path d="M364.500 465v8h7" fill="none" stroke="#444" stroke-width="2.500"/>' +
 '<rect x="381" y="459" width="940" height="16" fill="#cdd1d6"/><rect x="412" y="459" width="802" height="16" fill="#f5f6f8"/><path d="M381 459.500h940M381 475.500h940" stroke="#868d97"/>';
for (let q = -2; q <= 72; q++) {
  const x = 411 + q * 12.6;
  if (x < 385 || x > 1320 || q === 0 || q === 64) continue;
  if (q % 4 === 0) h += `<text x="${x + .5}" y="472" font-size="11.500" fill="#50555c" text-anchor="middle">${q / 4}</text>`;
  else if (q % 2 === 0) h += `<rect x="${Math.round(x)}" y="465" width="1" height="5" fill="#50555c"/>`;
  else h += `<rect x="${Math.round(x)}" y="467" width="1" height="1.500" fill="#50555c"/>`;
}
for (let i = 0; i < 12; i++) h += `<rect x="${474 + 63 * i}" y="477" width="1" height="3" fill="#555"/>`;
h += '<path d="M406.500 456.500h10v3l-5 5-5-5zM406.500 473.500v-3l5-5 5 5v3zM406.500 475.500h10v6h-10zM1209.500 475v-3l4.500-5.500 5 5.500v3z" fill="#e9ebee" stroke="#777d86"/>';
document.getElementById('hruler').innerHTML = h;

// Vertical ruler: zero at y = 607
let v = '<rect x="352" y="504" width="28" height="405" fill="#ccd0d5"/><rect x="357.500" y="504.500" width="17" height="410" fill="#f5f6f8" stroke="#868d97"/><rect x="358" y="505" width="16" height="103" fill="#cdd1d6"/><path d="M357 608.500h18" stroke="#868d97"/>';
for (let q = -8; q <= 24; q++) {
  const y = 607 + q * 12.6;
  if (q === 0) continue;
  if (q % 4 === 0) v += `<text transform="translate(370.500 ${y}) rotate(-90)" font-size="11.500" fill="#50555c" text-anchor="middle">${Math.abs(q / 4)}</text>`;
  else if (q % 2 === 0) v += `<rect x="364" y="${Math.round(y)}" width="5" height="1" fill="#50555c"/>`;
  else v += `<rect x="366" y="${Math.round(y)}" width="1.500" height="1" fill="#50555c"/>`;
}
document.getElementById('vruler').innerHTML = v;

// Track each label so it fills its nominal width, once styles and fonts are in place
function fit() {
  document.querySelectorAll('[data-w]').forEach(e => {
    e.style.letterSpacing = '0px';
    const w = e.getBoundingClientRect().width;
    e.style.letterSpacing = ((+e.dataset.w - w) / e.textContent.length) + 'px';
  });
}
fit();
addEventListener('load', fit);
document.fonts.ready.then(fit);
requestAnimationFrame(() => requestAnimationFrame(fit));
[30, 100, 250, 500].forEach(t => setTimeout(fit, t));
</script>
</body>
</html>
